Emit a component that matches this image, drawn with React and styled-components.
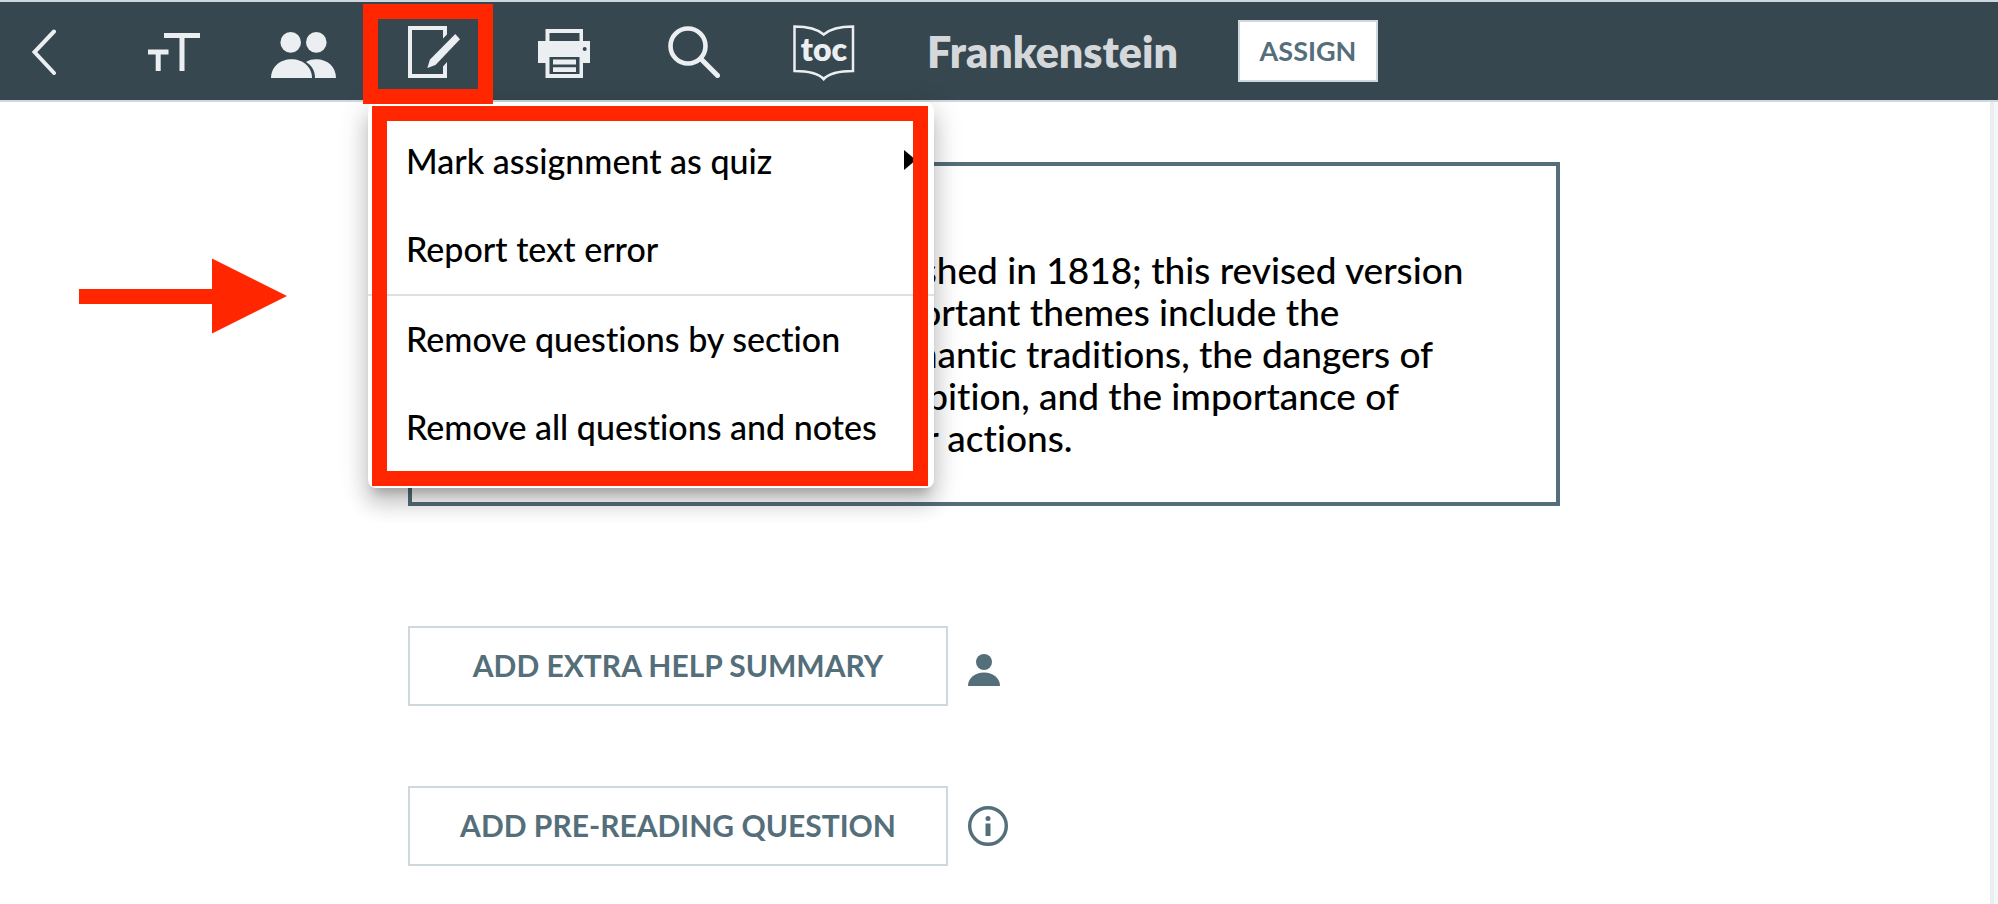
import React from 'react';
import styled, { createGlobalStyle } from "styled-components";

const GlobalStyle = createGlobalStyle`
  * {
    box-sizing: border-box;
  }

  body {
    margin: 0;
    background: #fff;
    color: #000;
    font-family: Lato, "Open Sans", sans-serif;
    font-variant-ligatures: none;
  }

  button {
    margin: 0;
    padding: 0;
    border: none;
    background: none;
    color: inherit;
    font: inherit;
    cursor: pointer;
  }

  svg {
    display: block;
    flex: none;
  }
`

const menuGroups = [
  [
    { label: 'Mark assignment as quiz', submenu: true },
    { label: 'Report text error' },
  ],
  [
    { label: 'Remove questions by section' },
    { label: 'Remove all questions and notes' },
  ],
];

export default function App() {
  return (
    <>
      <GlobalStyle />
      <Page>
        <Header>
          <BackButton aria-label="Back"><BackIcon /></BackButton>
          <ToolButton aria-label="Text size"><TextSizeIcon /></ToolButton>
          <ToolButton aria-label="Students"><PeopleIcon /></ToolButton>
          <Tool>
            <ToolButton aria-label="Edit" aria-haspopup="menu" aria-expanded="true"><EditIcon /></ToolButton>
            <ToolCallout />
            <Menu role="menu">
              {menuGroups.map((group, i) => (
                <MenuGroup key={i}>
                  {group.map((item) => (
                    <MenuItem key={item.label} role="menuitem">
                      {item.label}
                      {item.submenu && <SubmenuIcon />}
                    </MenuItem>
                  ))}
                </MenuGroup>
              ))}
              <MenuCallout />
            </Menu>
          </Tool>
          <ToolButton aria-label="Print"><PrintIcon /></ToolButton>
          <ToolButton aria-label="Search"><SearchIcon /></ToolButton>
          <ToolButton aria-label="Table of contents"><TocIcon /></ToolButton>
          <Title>Frankenstein</Title>
          <AssignButton>ASSIGN</AssignButton>
        </Header>
        <Body>
          <Content>
            <Intro>
              Frankenstein was first published in 1818; this revised version<br />
              was published in 1831. Important themes include the<br />
              influence of Gothic and Romantic traditions, the dangers of<br />
              the unchecked scientific ambition, and the importance of<br />
              taking responsibility for your actions.
            </Intro>
            <Actions>
              <ActionRow>
                <ActionButton>ADD EXTRA HELP SUMMARY</ActionButton>
                <PersonIcon />
              </ActionRow>
              <ActionRow>
                <ActionButton>ADD PRE-READING QUESTION</ActionButton>
                <InfoIcon />
              </ActionRow>
            </Actions>
            <Arrow width="208" height="76" viewBox="0 0 208 76" aria-hidden="true">
              <path d="M0 31H133V0.500L208 38L133 75.500V46H0Z" fill="#ff2600" />
            </Arrow>
          </Content>
          <ScrollTrack />
        </Body>
      </Page>
    </>
  );
}

function BackIcon() {
  return (
    <svg width="26" height="46" viewBox="0 0 26 46" fill="none" stroke="#eceff1" strokeWidth="4" strokeLinecap="round">
      <path d="M22 2.500L2.500 23L22 44" />
    </svg>
  );
}

function TextSizeIcon() {
  return (
    <svg width="52" height="38" viewBox="0 0 52 38" fill="#eceff1">
      <path d="M16 0H52V5H36.500V38H31.500V5H16Z" />
      <path d="M0 16.500H20.500V21.500H12.700V38H7.700V21.500H0Z" />
    </svg>
  );
}

function PeopleIcon() {
  return (
    <svg width="66" height="52" viewBox="0 -6 66 52" fill="#eceff1">
      <circle cx="19.700" cy="10.400" r="10.300" />
      <circle cx="45.300" cy="10.400" r="10.300" />
      <path d="M0 46C0 35 9 27.300 20.500 27.300S41 35 41 46Z" />
      <path d="M35 30C38 28 41.500 27.300 45 27.300C57 27.300 65 35 65 46H44C44 39 41 33.500 35 30Z" />
    </svg>
  );
}

function EditIcon() {
  return (
    <svg width="52" height="52" viewBox="0 0 52 52" fill="#eceff1">
      <path d="M0 0H39V8.500L35 12.500V4H4V48H35V40.500L39 36V52H0Z" />
      <path d="M47.300 8L52 13.300L27.500 39L19.300 42L22 33.500Z" />
    </svg>
  );
}

function PrintIcon() {
  return (
    <svg width="52" height="52" viewBox="0 -3 52 52">
      <path fill="#eceff1" fillRule="evenodd" d="M7.500 0H45V12H52V34H45V49H7.500V34H0V12H7.500ZM11.500 4V12H41.500V4ZM11.500 28V45H41.500V28Z" />
      <path fill="#eceff1" d="M15 30.500H38V35.500H15ZM15 38.300H38V43H15Z" />
      <circle cx="46.700" cy="20" r="2" fill="#37474f" />
    </svg>
  );
}

function SearchIcon() {
  return (
    <svg width="52" height="52" viewBox="0 0 52 52" fill="none" stroke="#eceff1">
      <circle cx="20" cy="20" r="17.500" strokeWidth="4.600" />
      <path d="M33 33L49.500 49.500" strokeWidth="5" strokeLinecap="round" />
    </svg>
  );
}

function TocIcon() {
  return (
    <svg width="62" height="59" viewBox="0 -2 62 59">
      <path d="M1.500 1.500C13 1.500 24 3.500 30.700 9.500C37.500 3.500 48 1.500 60 1.500V46C49 46 37.500 47 30.700 54C24 47 13 46 1.500 46Z" fill="none" stroke="#eceff1" strokeWidth="2.500" />
      <path d="M25 49.500L30.700 52L36.500 49.500L30.700 56Z" fill="#eceff1" />
      <TocText x="31" y="36">toc</TocText>
    </svg>
  );
}

function SubmenuIcon() {
  return (
    <svg width="12" height="20" viewBox="0 0 12 20">
      <path d="M0 0L12 10L0 20Z" />
    </svg>
  );
}

function PersonIcon() {
  return (
    <svg width="40" height="40" viewBox="0 0 40 40" fill="#546e7a">
      <circle cx="16" cy="16" r="8" />
      <path d="M0 40C0 32 7 26.500 16 26.500S32 32 32 40Z" />
    </svg>
  );
}

function InfoIcon() {
  return (
    <svg width="40" height="40" viewBox="0 0 40 40" fill="#546e7a">
      <circle cx="20" cy="20" r="18.300" fill="none" stroke="#546e7a" strokeWidth="3.400" />
      <circle cx="20" cy="12.500" r="2.500" />
      <path d="M17.500 17.500H22.500V30H17.500Z" />
    </svg>
  );
}

const Page = styled.div`
  display: flex;
  flex-direction: column;
  min-height: 100vh;
`

const Header = styled.header`
  display: flex;
  align-items: center;
  height: 102px;
  border-top: 2px solid #cfd8dc;
  border-bottom: 2px solid #cfd8dc;
  background: #37474f;
`

const ToolButton = styled.button`
  display: flex;
  align-items: center;
  justify-content: center;
  width: 130px;
  height: 98px;
  padding-top: 2px;
`

const BackButton = styled(ToolButton)`
  justify-content: flex-start;
  width: 109px;
  padding-left: 32px;
`

const Tool = styled.div`
  position: relative;
`

/* red marker frames drawn over the UI */
const Callout = styled.div`
  position: absolute;
  border: 15px solid #ff2600;
  pointer-events: none;
`

const ToolCallout = styled(Callout)`
  top: 2px;
  left: -6px;
  width: 130px;
  height: 100px;
  z-index: 3;
`

const MenuCallout = styled(Callout)`
  top: 4px;
  right: 6px;
  bottom: 2px;
  left: 4px;
`

const Menu = styled.div`
  position: absolute;
  top: 100px;
  left: -1px;
  z-index: 2;
  width: 566px;
  padding: 16px 0;
  border-radius: 8px;
  background: #fff;
  box-shadow: 0 10px 10px -6px rgba(0, 0, 0, 0.2),
    0 16px 20px 2px rgba(0, 0, 0, 0.14),
    0 6px 28px 4px rgba(0, 0, 0, 0.12);
`

const MenuGroup = styled.div`
  & + & {
    border-top: 2px solid #e0e0e0;
  }
`

const MenuItem = styled.button`
  display: flex;
  align-items: center;
  justify-content: space-between;
  width: 100%;
  height: 88px;
  padding: 0 18px 4px 38px;
  font-size: 34px;
  font-weight: 500;
  text-align: left;
`

const Title = styled.h1`
  margin: 0 60px 0 38px;
  color: #d5d8db;
  font-size: 43px;
  font-weight: 800;
`

const AssignButton = styled.button`
  width: 140px;
  height: 62px;
  padding-bottom: 2px;
  border: 2px solid #cfd8dc;
  background: #fff;
  color: #546e7a;
  font-size: 27px;
  font-weight: 700;
`

const TocText = styled.text`
  fill: #eceff1;
  font-size: 32px;
  font-weight: 800;
  text-anchor: middle;
`

const Body = styled.div`
  display: flex;
  flex: 1;
`

const Content = styled.main`
  position: relative;
  flex: 1;
  padding: 60px 0 36px 408px;
`

const ScrollTrack = styled.div`
  width: 8px;
  border-left: 4px solid #eceff1;
  background: #f5f8fa;
`

const Intro = styled.p`
  max-width: 1152px;
  margin: 0;
  padding: 83px 64px 43px;
  border: 4px solid #546e7a;
  font-size: 37px;
  font-weight: 500;
  line-height: 42px;
`

const Actions = styled.div`
  display: flex;
  flex-direction: column;
  gap: 80px;
  margin-top: 120px;
`

const ActionRow = styled.div`
  display: flex;
  align-items: center;
  gap: 20px;
`

const ActionButton = styled.button`
  width: 540px;
  height: 80px;
  padding-bottom: 2px;
  border: 2px solid #cfd8dc;
  color: #546e7a;
  font-size: 30px;
  font-weight: 700;
`

const Arrow = styled.svg`
  position: absolute;
  top: 156px;
  left: 79px;
`
